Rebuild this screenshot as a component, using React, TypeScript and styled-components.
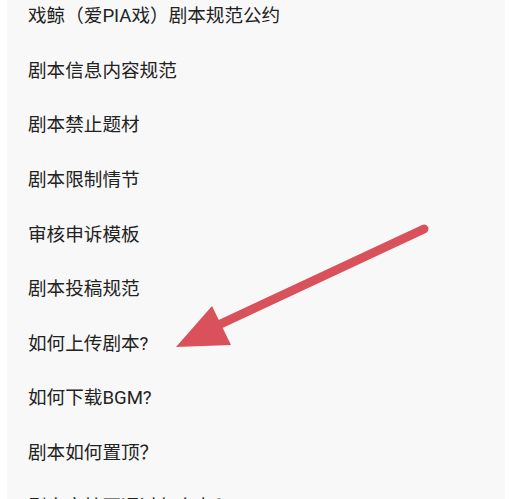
import React from "react";
import styled, { createGlobalStyle } from "styled-components";

const Global = createGlobalStyle`
  html, body { margin: 0; padding: 0; background: #ffffff; }
  body { font-family: Roboto, "Noto Sans CJK SC", sans-serif; }
  #root { width: 510px; height: 499px; overflow: hidden; }
`;

const Page = styled.div`
  position: relative;
  width: 510px;
  height: 499px;
  overflow: hidden;
  background: #ffffff;
  padding: 0 5px 0 7px;
  box-sizing: border-box;
`;

const Panel = styled.div`
  height: 100%;
  background: #f8f8f8;
  overflow: hidden;
`;

const List = styled.ul`
  list-style: none;
  margin: -11px 0 0 0;
  padding: 0 0 0 21px;
`;

const Row = styled.li`
  height: 54.6px;
  display: flex;
  align-items: center;
  font-size: 18.6px;
  line-height: 1.2;
  color: #222222;
`;

const Arrow = styled.svg`
  position: absolute;
  left: 0;
  top: 0;
  pointer-events: none;
`;

const items = [
  "戏鲸（爱PIA戏）剧本规范公约",
  "剧本信息内容规范",
  "剧本禁止题材",
  "剧本限制情节",
  "审核申诉模板",
  "剧本投稿规范",
  "如何上传剧本?",
  "如何下载BGM?",
  "剧本如何置顶？",
  "剧本审核不通过怎么办？",
];

export default function App() {
  return (
    <>
      <Global />
      <Page>
        <Panel>
          <List>
            {items.map((t) => (
              <Row key={t}>{t}</Row>
            ))}
          </List>
        </Panel>
        <Arrow width="510" height="499" viewBox="0 0 510 499">
          <line x1="424" y1="229" x2="212" y2="328" stroke="#d9525b" strokeWidth="9" strokeLinecap="round" />
          <polygon points="176,347 212,306 231,345" fill="#d9525b" />
        </Arrow>
      </Page>
    </>
  );
}
